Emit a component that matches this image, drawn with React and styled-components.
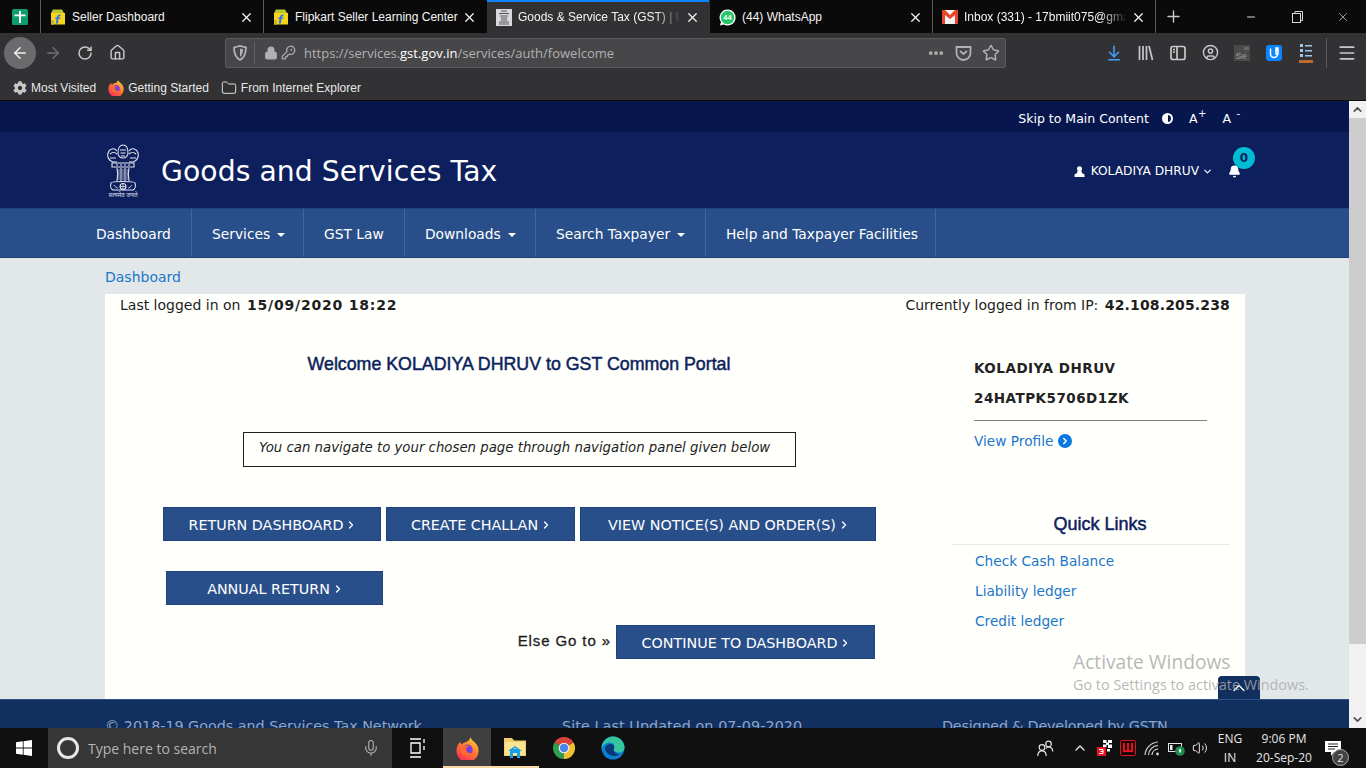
import React from "react";
import styled, { createGlobalStyle } from "styled-components";
import {
  ArrowLeft,
  ArrowRight,
  RotateCw,
  Home,
  Lock,
  KeyRound,
  Ellipsis,
  Star,
  ArrowDownToLine,
  Folder,
  X,
  Plus,
  Minus,
  Mic,
  ChevronUp,
  ChevronDown,
  ChevronRight,
  Volume2,
  Bell,
  Menu,
  CircleUser,
} from "lucide-react";
import { FaCog } from "react-icons/fa";

const GlobalStyle = createGlobalStyle`
  html, body { margin: 0; padding: 0; height: 100%; overflow: hidden; }
  * { box-sizing: border-box; }
  body { font-family: "DejaVu Sans", Verdana, sans-serif; }
`;

const Screen = styled.div`
  position: relative;
  width: 1366px;
  height: 768px;
  display: flex;
  flex-direction: column;
  overflow: hidden;
  background: #e2e8e9;
`;

/* browser chrome */
const TabBar = styled.div`
  height: 33px;
  display: flex;
  background: #0a0a0a;
  color: #f4f4f4;
  font-family: "Liberation Sans", Arial, sans-serif;
  font-size: 12px;
`;

const PinnedTab = styled.div`
  width: 41px;
  display: flex;
  align-items: center;
  padding-left: 12px;
  border-right: 1px solid #5a5a5a;
`;

const Tab = styled.div`
  width: 223px;
  display: flex;
  align-items: center;
  gap: 6px;
  padding: 1px 9px 0;
  border-right: 1px solid ${(p) => (p.$active || p.$beforeActive ? "transparent" : "#5a5a5a")};
  background: ${(p) => (p.$active ? "#323234" : "transparent")};
  box-shadow: ${(p) => (p.$active ? "inset 0 2px 0 #0a84ff" : "none")};
  svg { flex: none; }
`;

const TabTitle = styled.span`
  flex: 1;
  min-width: 0;
  white-space: nowrap;
  ${(p) =>
    p.$fade &&
    `-webkit-mask-image: linear-gradient(to right, #000 85%, transparent 102%);
     mask-image: linear-gradient(to right, #000 85%, transparent 102%);`}
`;

const NewTab = styled.div`
  width: 34px;
  display: flex;
  align-items: center;
  justify-content: center;
  color: #c8c8c8;
`;

const WindowControls = styled.div`
  margin-left: auto;
  display: flex;
  align-items: center;
  color: #d8d8d8;
`;

const WindowButton = styled.div`
  width: 46px;
  display: flex;
  justify-content: center;
`;

const NavToolbar = styled.div`
  height: 39px;
  display: flex;
  align-items: center;
  background: #323234;
  color: #c9c9cb;
`;

const BackCircle = styled.div`
  width: 32px;
  height: 32px;
  margin: 0 1px 0 4px;
  border-radius: 50%;
  background: #6b6b6d;
  color: #eeeeee;
  display: flex;
  align-items: center;
  justify-content: center;
`;

const ToolButton = styled.div`
  width: 32px;
  display: flex;
  justify-content: center;
  color: ${(p) => p.$color || "#c9c9cb"};
`;

const UrlBar = styled.div`
  width: 781px;
  height: 30px;
  margin: 0 92px;
  display: flex;
  align-items: center;
  background: #474749;
  border: 1px solid #5c5c5e;
  border-radius: 2px;
  color: #b1b1b3;
  font-family: "Open Sans", "Liberation Sans", sans-serif;
  font-size: 13px;
`;

const UrlShield = styled.div`
  width: 29px;
  height: 22px;
  display: flex;
  justify-content: center;
  align-items: center;
  border-right: 1px solid #5f6368;
`;

const UrlIcons = styled.div`
  display: flex;
  align-items: center;
  gap: 3px;
  padding: 0 8px 0 9px;
`;

const UrlText = styled.div`
  flex: 1;
  padding-top: 1px;
  white-space: nowrap;
  b { color: #ffffff; font-weight: 400; }
`;

const UrlActions = styled.div`
  display: flex;
  align-items: center;
  gap: 10px;
  padding-right: 5px;
`;

const ToolDivider = styled.div`
  width: 1px;
  height: 30px;
  margin: 0 4px 0 4px;
  background: #5a5a5c;
`;

const BookmarkBar = styled.div`
  height: 29px;
  display: flex;
  align-items: center;
  gap: 12px;
  padding: 3px 0 0 13px;
  background: #323234;
  border-bottom: 1px solid #0c0c0c;
  font-family: "Liberation Sans", Arial, sans-serif;
  font-size: 12px;
`;

const Bookmark = styled.div`
  height: 16px;
  display: flex;
  align-items: center;
  gap: 4px;
  color: #e8e8e8;
`;

const GearIcon = styled(FaCog)`
  width: 14px;
  height: 14px;
  color: #c9c9cb;
`;

/* page */
const Viewport = styled.div`
  flex: 1;
  min-height: 0;
  display: flex;
`;

const Page = styled.div`
  position: relative;
  flex: 1;
  min-width: 0;
  overflow: hidden;
  display: flex;
  flex-direction: column;
`;

const Scrollbar = styled.div`
  width: 17px;
  display: flex;
  flex-direction: column;
  background: #f1f1f1;
  color: #505050;
`;

const ScrollArrow = styled.div`
  height: 17px;
  display: flex;
  align-items: center;
  justify-content: center;
`;

const ScrollThumb = styled.div`
  height: 526px;
  background: #cdcdcd;
`;

const ScrollTrack = styled.div`
  flex: 1;
`;

const TopStrip = styled.div`
  height: 31px;
  flex: none;
  display: flex;
  align-items: center;
  justify-content: flex-end;
  padding: 4px 109px 0 0;
  gap: 13px;
  background: #07174d;
  color: #ffffff;
  font-size: 12.5px;
`;

const ContrastDot = styled.span`
  width: 11px;
  height: 11px;
  border-radius: 50%;
  border: 2px solid #ffffff;
  background: linear-gradient(to right, #ffffff 50%, #07174d 50%);
`;

const FontSizer = styled.span`
  position: relative;
  padding-right: 9px;
  margin-left: 3px;
  sup {
    position: absolute;
    right: 0;
    top: -2px;
    font-size: 10px;
    line-height: 10px;
  }
`;

const SiteHeader = styled.div`
  height: 76px;
  flex: none;
  display: flex;
  align-items: center;
  padding: 2px 108px 0 107px;
  background: #0d1f5c;
  color: #ffffff;
`;

const SiteTitle = styled.div`
  margin-left: 22px;
  font-size: 28.2px;
  letter-spacing: 0.1px;
`;

const UserArea = styled.div`
  position: relative;
  margin-left: auto;
  display: flex;
  align-items: center;
  font-size: 12.2px;
  gap: 6px;
`;

const UserChevron = styled(ChevronDown)`
  margin-left: -3px;
`;

const BellWrap = styled.div`
  position: relative;
  display: flex;
  margin-left: 9px;
`;

const BellBadge = styled.span`
  position: absolute;
  left: 5px;
  top: -18px;
  width: 22px;
  height: 22px;
  border-radius: 50%;
  background: #00bcd4;
  color: #0d1f5c;
  font-size: 12px;
  font-weight: 700;
  display: flex;
  align-items: center;
  justify-content: center;
`;

const MainNav = styled.div`
  height: 50px;
  flex: none;
  display: flex;
  padding-left: 76px;
  background: #294f8a;
  border-top: 1px solid #23457c;
  border-bottom: 1px solid #1d3f73;
`;

const NavItem = styled.div`
  width: ${(p) => p.$w}px;
  display: flex;
  align-items: center;
  gap: 7px;
  padding: 2px 0 0 20px;
  border-right: 1px solid #42659a;
  color: #ffffff;
  font-size: 13.8px;
  white-space: nowrap;
`;

const Caret = styled.span`
  width: 0;
  height: 0;
  border-left: 4px solid transparent;
  border-right: 4px solid transparent;
  border-top: 4px solid #ffffff;
  margin-top: 2px;
`;

const PageBody = styled.div`
  flex: none;
  padding: 0 104px 0 105px;
`;

const Crumb = styled.div`
  height: 36px;
  padding-top: 11px;
  color: #1a77c9;
  font-size: 14px;
`;

const Card = styled.div`
  height: 405px;
  background: #fffffc;
  color: #1e1e1e;
  font-size: 14px;
`;

const LoginRow = styled.div`
  display: flex;
  justify-content: space-between;
  padding: 3px 15px 0;
  height: 22px;
`;

const Stamp = styled.b`
  font-weight: 700;
  margin-left: 2px;
  letter-spacing: ${(p) => p.$spacing}px;
`;

const CardColumns = styled.div`
  display: flex;
`;

const LeftColumn = styled.div`
  width: 828px;
`;

const Welcome = styled.h1`
  margin: 38px 0 0;
  text-align: center;
  font-family: "Liberation Sans", Arial, sans-serif;
  font-size: 17.8px;
  line-height: 20px;
  font-weight: 400;
  -webkit-text-stroke: 0.5px #0d1f5c;
  color: #0d1f5c;
`;

const NoteBox = styled.div`
  width: 553px;
  height: 35px;
  margin: 58px 0 0 138px;
  padding: 0 0 4px 15px;
  display: flex;
  align-items: center;
  border: 1px solid #1e1e1e;
  font-size: 13.3px;
  font-style: italic;
`;

const ButtonRow = styled.div`
  display: flex;
  gap: 5px;
  margin: ${(p) => p.$top}px 0 0 ${(p) => p.$left}px;
`;

const BlueButton = styled.div`
  height: 34px;
  width: ${(p) => p.$w}px;
  padding: 2px 0 0 2px;
  display: flex;
  align-items: center;
  justify-content: center;
  gap: 2px;
  background: #294f8a;
  border: 1px solid #1f437c;
  color: #ffffff;
  font-size: 14.3px;
  white-space: nowrap;
`;

const ElseRow = styled.div`
  display: flex;
  align-items: center;
  justify-content: flex-end;
  gap: 5px;
  margin-top: 20px;
  padding-right: 58px;
`;

const ElseLabel = styled.span`
  margin-bottom: 3px;
  font-family: "Liberation Sans", Arial, sans-serif;
  font-size: 15px;
  font-weight: 400;
  letter-spacing: 0.9px;
  -webkit-text-stroke: 0.3px #1e1e1e;
`;

const RightColumn = styled.div`
  width: 278px;
  margin-left: 19px;
`;

const Profile = styled.div`
  padding: 37px 23px 0 22px;
`;

const ProfileLine = styled.div`
  height: 30px;
  font-size: 13.5px;
  line-height: 30px;
  font-weight: 700;
  letter-spacing: 0.5px;
  color: #222;
`;

const ProfileRule = styled.div`
  height: 1px;
  margin-top: 7px;
  background: #808080;
`;

const LinkText = styled.div`
  display: flex;
  align-items: center;
  gap: 5px;
  height: 30px;
  color: #1a77c9;
  font-size: 13.7px;
`;

const ProfileLink = styled(LinkText)`
  margin-top: 5px;
`;

const ArrowDot = styled.span`
  width: 14px;
  height: 14px;
  border-radius: 50%;
  background: #0a78e0;
  color: #ffffff;
  display: flex;
  align-items: center;
  justify-content: center;
`;

const QuickTitle = styled.h2`
  margin: 58px 0 0;
  padding: 0 0 10px 18px;
  text-align: center;
  border-bottom: 1px solid #e9ebe9;
  font-family: "Liberation Sans", Arial, sans-serif;
  font-size: 18px;
  line-height: 20px;
  font-weight: 400;
  -webkit-text-stroke: 0.5px #0d1f5c;
  color: #0d1f5c;
`;

const QuickLinks = styled.div`
  padding: 1px 0 0 23px;
`;

const Footer = styled.div`
  height: 60px;
  flex: none;
  display: flex;
  padding: 18px 0 0 105px;
  background: #12305f;
  border-top: 1px solid #2d5288;
  color: #8ea6c6;
  font-size: 14.3px;
`;

const FooterCell = styled.span`
  width: ${(p) => p.$w}px;
  white-space: nowrap;
  letter-spacing: ${(p) => p.$spacing || 0}px;
`;

const BackToTop = styled.div`
  position: absolute;
  left: 1218px;
  top: 575px;
  width: 42px;
  height: 23px;
  padding-top: 2px;
  display: flex;
  justify-content: center;
  color: #ffffff;
  background: #12305f;
  border-radius: 4px 4px 0 0;
`;

const ActivateNote = styled.div`
  position: absolute;
  left: 1073px;
  top: 650px;
  font-family: "Open Sans", "Liberation Sans", sans-serif;
  font-size: 14.4px;
  color: rgba(170, 170, 170, 0.85);
  div:first-child { font-size: 19.2px; line-height: 24px; }
  div:last-child { line-height: 22px; }
`;

/* windows taskbar */
const Taskbar = styled.div`
  height: 40px;
  flex: none;
  display: flex;
  align-items: center;
  background: #101010;
  color: #ffffff;
  font-family: "Open Sans", "Liberation Sans", sans-serif;
`;

const StartButton = styled.div`
  width: 48px;
  display: flex;
  justify-content: center;
`;

const SearchBox = styled.div`
  width: 344px;
  height: 40px;
  display: flex;
  align-items: center;
  gap: 9px;
  padding: 0 12px 0 9px;
  background: #363636;
  color: #b4b4b4;
  font-size: 14px;
`;

const Cortana = styled.span`
  width: 22px;
  height: 22px;
  border-radius: 50%;
  border: 3px solid #e8e8e8;
`;

const SearchHint = styled.span`
  flex: 1;
`;

const TaskApp = styled.div`
  width: ${(p) => p.$w || 48}px;
  height: 40px;
  display: flex;
  align-items: center;
  justify-content: center;
  background: ${(p) => (p.$active ? "#3f3f3f" : "transparent")};
  box-shadow: ${(p) => (p.$open ? "inset 0 -2px 0 #f8d9a8" : "none")};
`;

const Tray = styled.div`
  margin-left: auto;
  display: flex;
  align-items: center;
  color: #e6e6e6;
`;

const TrayIcon = styled.div`
  width: ${(p) => p.$w || 24}px;
  display: flex;
  justify-content: center;
`;

const TrayStack = styled.div`
  text-align: center;
  font-size: 12px;
  line-height: 19px;
  width: ${(p) => p.$w}px;
`;

const NoticeIcon = styled.div`
  position: relative;
  width: 46px;
  padding-left: 5px;
  display: flex;
`;

const NoticeBadge = styled.span`
  position: absolute;
  left: 12px;
  top: 8px;
  width: 17px;
  height: 17px;
  border-radius: 50%;
  background: #444;
  border: 1px solid #aaa;
  font-size: 11px;
  display: flex;
  align-items: center;
  justify-content: center;
`;

function FlipkartIcon() {
  return (
    <svg width="16" height="16" viewBox="0 0 16 16">
      <path d="M1 4h14v11.500H1z" fill="#f7d51d" />
      <path d="M3 .5h9l2 3.500H1z" fill="#b5c832" />
      <path d="M1 11h3v4.500H1z" fill="#c9b92a" />
      <path d="M10.500 5.500c-2.500 0-3.500 1-3.800 3H5.300l-.2 1.300h1.400L5.800 14.500h2l.7-4.700h2l.2-1.300h-2c.1-1 .6-1.400 1.800-1.400z" fill="#2874f0" />
    </svg>
  );
}

function PinnedIcon() {
  return (
    <svg width="16" height="16" viewBox="0 0 16 16">
      <rect width="16" height="16" rx="1.500" fill="#0f9d6b" />
      <path d="M7 2h2v3.500h4.500v1.800H9V14H7V7.300H2.500V5.500H7z" fill="#fff" />
    </svg>
  );
}

function EmblemIcon() {
  return (
    <svg width="32" height="54" viewBox="0 0 32 54">
      <g fill="none" stroke="#e6e6f0" strokeWidth="1.100">
        <path d="M11 9c0-5 2-8 5-8s5 3 5 8c0 3-2 5-5 5s-5-2-5-5z" />
        <path d="M10 7C7 3 2 5 1 9c-1 4 1 8 5 9h4M22 7c3-4 8-2 9 2 1 4-1 8-5 9h-4" />
        <path d="M13 6h6M13.500 9h5M14 12h4M3 10c2-2 5-2 7 0M29 10c-2-2-5-2-7 0M3 14h6M23 14h6" />
        <path d="M5 19h22v4H5z" />
        <path d="M9 21h2M13 21h2M17 21h2M21 21h2" />
        <path d="M10 24c1 4 1 8 0 13M14 24v13M18 24v13M22 24c-1 4-1 8 0 13" />
        <path d="M12 25v11M20 25v11M16 25v11" strokeWidth="0.600" />
        <path d="M4 39c0-2 24-2 24 0 1 3 0 6-2 7H6c-2-1-3-4-2-7z" />
        <circle cx="16" cy="42.500" r="3" />
        <path d="M16 39.500v6M13 42.500h6M7 41c1 2 3 3 4 3M25 41c-1 2-3 3-4 3" strokeWidth="0.800" />
      </g>
      <text x="16" y="53" textAnchor="middle" fontSize="6" fill="#dcdce8" fontFamily="Noto Sans, DejaVu Sans, sans-serif">सत्यमेव जयते</text>
    </svg>
  );
}

function GstFavicon() {
  return (
    <svg width="16" height="17" viewBox="0 0 16 17">
      <rect width="16" height="17" fill="#d9d9dc" />
      <g fill="none" stroke="#55555c" strokeWidth="1">
        <path d="M5 2h6M3 4.500h10M4 7h8M6 8v4M10 8v4M8 8v4M3 13h10M3 15h10" />
      </g>
    </svg>
  );
}

function GmailIcon() {
  return (
    <svg width="16" height="14" viewBox="0 0 16 14">
      <rect width="16" height="14" fill="#f2f2f2" />
      <path d="M0 0h3l5 5 5-5h3v14h-3V5L8 9 3 5v9H0z" fill="#e8452c" />
    </svg>
  );
}

function WhatsAppIcon() {
  return (
    <svg width="17" height="17" viewBox="0 0 17 17">
      <path d="M8.500.5a8 8 0 1 1-3.800 15L1 16.500l1-3.500A8 8 0 0 1 8.500.5z" fill="#ffffff" />
      <circle cx="8.500" cy="8.500" r="6.800" fill="#25c76a" />
      <text x="8.500" y="11" fontSize="7.500" fontWeight="700" textAnchor="middle" fill="#fff" fontFamily="Liberation Sans">44</text>
    </svg>
  );
}

function FirefoxIcon({ id, size = 16 }) {
  return (
    <svg width={size} height={size * 1.08} viewBox="0 0 24 26">
      <defs>
        <linearGradient id={id} x1="0.8" y1="0" x2="0.2" y2="1">
          <stop offset="0" stopColor="#ffd33d" />
          <stop offset="0.45" stopColor="#ff7b2e" />
          <stop offset="1" stopColor="#f8275f" />
        </linearGradient>
      </defs>
      <path d="M15 1c1 3 3 4 5 6 3 3 4 6 3.500 9.500A11.500 11.500 0 0 1 .5 15C.5 11 3 7 5 6c0 1 0 2 1 3 1-2 3-2.500 5-3 2-1 4-2.500 4-5z" fill={`url(#${id})`} />
      <circle cx="12" cy="14.500" r="5.500" fill="#7a3de0" />
      <path d="M6.500 11c3-1.500 6-1 7 0-2 .5-3 1.500-3 3 0 3 3 5 7 3.500-2 3.500-8 4.500-11 1-2-2-2.500-5-0-7.500z" fill="#ff6a2e" />
    </svg>
  );
}

function ChromeIcon() {
  return (
    <svg width="24" height="24" viewBox="0 0 24 24">
      <path d="M12 12L2.470 6.500A11 11 0 0 1 21.530 6.500z" fill="#d8443a" />
      <path d="M12 12l9.530-5.500A11 11 0 0 1 12 23z" fill="#f3c02e" />
      <path d="M12 12v11A11 11 0 0 1 2.470 6.500z" fill="#2f9e4f" />
      <circle cx="12" cy="12" r="5.300" fill="#f2f2f2" />
      <circle cx="12" cy="12" r="4.200" fill="#4a84ea" />
    </svg>
  );
}

function EdgeIcon() {
  return (
    <svg width="24" height="24" viewBox="0 0 24 24">
      <circle cx="12" cy="12" r="11.500" fill="#0c7fd3" />
      <path d="M12 .5C18.500.5 23.500 5.500 23.500 11.500c0 3-2.500 5-5.500 5-3 0-5.500-1.500-5.500-3 0-1 1-1.300 1-3C13.500 7.500 10.500 6 8 6.500 4 7 1.500 9.500.7 13 .5 6 5.500.5 12 .5z" fill="#35c6a0" />
      <path d="M4 12c1-3 4-4.500 6.500-4 2.500.5 3 3 2.500 4.500-1 3 2 6 6 5.500-2 1.500-4 2-6 2-5 0-9-4-9-8z" fill="#063a78" />
    </svg>
  );
}

function ExplorerIcon() {
  return (
    <svg width="22" height="22" viewBox="0 0 22 22">
      <path d="M0 1h8l2 2.500h12V19H0z" fill="#f0cf6a" />
      <path d="M1 5h20v13H1z" fill="#fae596" />
      <path d="M6 12h10v9h-3v-5H9v5H6z" fill="#1aa0e6" />
      <path d="M4 14l7-5 7 5h-2l-5-3-5 3z" fill="#1aa0e6" />
    </svg>
  );
}

function WindowsLogo() {
  return (
    <svg width="16" height="16" viewBox="0 0 16 16" fill="#fff">
      <path d="M0 2.300l6.800-1v6.300H0zM7.600 1.200L16 0v7.600H7.600zM0 8.400h6.800v6.300l-6.800-1zM7.600 8.400H16V16l-8.400-1.200z" />
    </svg>
  );
}

function PocketIcon() {
  return (
    <svg width="17" height="16" viewBox="0 0 17 16" fill="none" stroke="currentColor" strokeWidth="1.800">
      <path d="M1.500 2h14v6a7 7 0 0 1-14 0z" />
      <path d="M5 6l3.500 3L12 6" />
    </svg>
  );
}

function ShieldIcon() {
  return (
    <svg width="14" height="16" viewBox="0 0 14 16" fill="none" stroke="currentColor" strokeWidth="1.800">
      <path d="M1 2.500C3 2 5 1.500 7 1c2 .5 4 1 6 1.500 0 6-1.500 10-6 12.500C2.500 12.500 1 8.500 1 2.500z" />
      <path d="M7 3.500c1 .3 2 .5 3.200.8C10 8 9 10.500 7 12z" fill="currentColor" stroke="none" />
    </svg>
  );
}

function LibraryIcon() {
  return (
    <svg width="16" height="16" viewBox="0 0 16 16" fill="none" stroke="currentColor" strokeWidth="1.700">
      <path d="M1.500 1v14M5 1v14M8.500 1v14M11 1l3.500 14" />
    </svg>
  );
}

function SidebarIcon() {
  return (
    <svg width="16" height="16" viewBox="0 0 16 16" fill="none" stroke="currentColor" strokeWidth="1.700">
      <rect x="1" y="1.500" width="14" height="13" rx="2" />
      <path d="M7 1.500v13" />
      <path d="M3 4.500h2M3 7h2" />
    </svg>
  );
}

function SeleniumIcon() {
  return (
    <svg width="16" height="16" viewBox="0 0 16 16">
      <rect width="16" height="16" fill="#4a4a4a" />
      <text x="1.500" y="14" fontSize="9" fontWeight="700" fill="#8a8a8a" fontFamily="Liberation Sans">Se</text>
      <rect x="10" y="2" width="5" height="3" fill="#6a6a6a" />
    </svg>
  );
}

function UBlockIcon() {
  return (
    <svg width="16" height="16" viewBox="0 0 16 16">
      <rect width="16" height="16" rx="3" fill="#0a84ff" />
      <path d="M4.500 3.500v5.500a3.500 3.500 0 0 0 7 0M10 3h2v2h-2zM10 6h2v3h-2z" fill="none" stroke="#fff" strokeWidth="1.500" />
    </svg>
  );
}

function ListExtensionIcon() {
  return (
    <svg width="14" height="20" viewBox="0 0 14 20">
      <path d="M1 1h3v3H1zM1 6h3v3H1zM1 11h3v3H1z" fill="#9fc7ea" />
      <path d="M6 2h7v1.500H6zM6 7h7v1.500H6zM6 12h7v1.500H6z" fill="#9fc7ea" />
      <rect y="17" width="14" height="3" fill="#c0692a" />
    </svg>
  );
}

function RestoreIcon() {
  return (
    <svg width="11" height="12" viewBox="0 0 11 12" fill="none" stroke="currentColor">
      <rect x="0.500" y="2.500" width="8" height="9" />
      <path d="M3 2.500V.5h7.500v9H8.500" />
    </svg>
  );
}

function PeopleIcon() {
  return (
    <svg width="17" height="17" viewBox="0 0 17 17" fill="none" stroke="#e6e6e6" strokeWidth="1.200">
      <circle cx="11.500" cy="4" r="2.800" />
      <circle cx="5" cy="7.500" r="2.800" />
      <path d="M.8 16c0-3.500 1.800-5.200 4.200-5.200S9.200 12.500 9.200 16M9 8.500c.8-1 1.500-1.500 2.500-1.500 2.400 0 4.200 1.500 4.200 4.500" />
    </svg>
  );
}

function DropboxTrayIcon() {
  return (
    <svg width="17" height="16" viewBox="0 0 17 16">
      <path d="M1 7h9v9H1z" fill="#e81123" />
      <path d="M7 0h3.500v3H7zM12 0h4v3h-4zM7 4.500h3.500v2.500H7zM12 4.500h4V8h-4zM10 2.500h3v2.500h-3zM11 9h3v2.500h-3z" fill="#fff" />
      <path d="M3 9.500h4v4H3M4.500 11.500H7" fill="none" stroke="#fff" />
    </svg>
  );
}

function WpsIcon() {
  return (
    <svg width="16" height="16" viewBox="0 0 16 16">
      <rect x="0.500" y="0.500" width="15" height="15" rx="1" fill="#1a0505" stroke="#e81123" />
      <path d="M4 3v8h8V3M8 3v8" fill="none" stroke="#e81123" strokeWidth="2" />
    </svg>
  );
}

function SignalIcon() {
  return (
    <svg width="16" height="16" viewBox="0 0 16 16" fill="none" stroke="#d8d8d8" strokeWidth="1.200">
      <path d="M1 15A14 14 0 0 1 14 2M4.500 15A10 10 0 0 1 14 5.500M8 15A6.500 6.500 0 0 1 14 9" />
      <circle cx="13.500" cy="14" r="1.400" fill="#d8d8d8" stroke="none" />
    </svg>
  );
}

function BatteryIcon() {
  return (
    <svg width="17" height="16" viewBox="0 0 17 16">
      <rect x="0.500" y="3.500" width="13" height="8" fill="none" stroke="#e6e6e6" />
      <rect x="2" y="5" width="2.500" height="5" fill="#e6e6e6" />
      <circle cx="12" cy="11" r="4.800" fill="#1e8f4e" />
      <path d="M12 8.500c1.500 1 1.500 3 0 4.500-1.500-1.500-1.500-3.500 0-4.500z" fill="#fff" />
    </svg>
  );
}

const browserTabs = [
  { title: "Seller Dashboard", icon: <FlipkartIcon /> },
  { title: "Flipkart Seller Learning Center", icon: <FlipkartIcon />, beforeActive: true },
  { title: "Goods & Service Tax (GST) | Us", icon: <GstFavicon />, active: true, fade: true },
  { title: "(44) WhatsApp", icon: <WhatsAppIcon /> },
  { title: "Inbox (331) - 17bmiit075@gma", icon: <GmailIcon />, fade: true },
];

const navItems = [
  { label: "Dashboard", width: 116 },
  { label: "Services", width: 112, caret: true },
  { label: "GST Law", width: 101 },
  { label: "Downloads", width: 131, caret: true },
  { label: "Search Taxpayer", width: 170, caret: true },
  { label: "Help and Taxpayer Facilities", width: 230 },
];

const quickLinks = ["Check Cash Balance", "Liability ledger", "Credit ledger"];

function PortalButton({ width, children }) {
  return (
    <BlueButton $w={width}>
      {children}
      <ChevronRight size={12} strokeWidth={2.5} />
    </BlueButton>
  );
}

export default function App() {
  return (
    <Screen>
      <GlobalStyle />
      <TabBar>
        <PinnedTab>
          <PinnedIcon />
        </PinnedTab>
        {browserTabs.map((tab) => (
          <Tab key={tab.title} $active={tab.active} $beforeActive={tab.beforeActive}>
            {tab.icon}
            <TabTitle $fade={tab.fade}>{tab.title}</TabTitle>
            <X size={15} strokeWidth={2} />
          </Tab>
        ))}
        <NewTab>
          <Plus size={19} strokeWidth={1.8} />
        </NewTab>
        <WindowControls>
          <WindowButton>
            <Minus size={12} />
          </WindowButton>
          <WindowButton>
            <RestoreIcon />
          </WindowButton>
          <WindowButton>
            <X size={14} strokeWidth={1.2} />
          </WindowButton>
        </WindowControls>
      </TabBar>

      <NavToolbar>
        <BackCircle>
          <ArrowLeft size={18} />
        </BackCircle>
        <ToolButton $color="#707072">
          <ArrowRight size={18} />
        </ToolButton>
        <ToolButton>
          <RotateCw size={16} strokeWidth={2.2} />
        </ToolButton>
        <ToolButton>
          <Home size={17} strokeWidth={2} />
        </ToolButton>
        <UrlBar>
          <UrlShield>
            <ShieldIcon />
          </UrlShield>
          <UrlIcons>
            <Lock size={14} fill="currentColor" />
            <KeyRound size={15} />
          </UrlIcons>
          <UrlText>
            https://services.<b>gst.gov.in</b>/services/auth/fowelcome
          </UrlText>
          <UrlActions>
            <Ellipsis size={18} strokeWidth={3} />
            <PocketIcon />
            <Star size={18} strokeWidth={2} />
          </UrlActions>
        </UrlBar>
        <ToolButton $color="#45a1ff">
          <ArrowDownToLine size={18} strokeWidth={2} />
        </ToolButton>
        <ToolButton>
          <LibraryIcon />
        </ToolButton>
        <ToolButton>
          <SidebarIcon />
        </ToolButton>
        <ToolButton>
          <CircleUser size={17} />
        </ToolButton>
        <ToolButton>
          <SeleniumIcon />
        </ToolButton>
        <ToolButton>
          <UBlockIcon />
        </ToolButton>
        <ToolButton>
          <ListExtensionIcon />
        </ToolButton>
        <ToolDivider />
        <ToolButton>
          <Menu size={20} strokeWidth={2} />
        </ToolButton>
      </NavToolbar>

      <BookmarkBar>
        <Bookmark>
          <GearIcon />
          Most Visited
        </Bookmark>
        <Bookmark>
          <FirefoxIcon id="ff-bookmark" />
          Getting Started
        </Bookmark>
        <Bookmark>
          <Folder size={16} strokeWidth={1.4} />
          From Internet Explorer
        </Bookmark>
      </BookmarkBar>

      <Viewport>
        <Page>
          <TopStrip>
            <span>Skip to Main Content</span>
            <ContrastDot />
            <FontSizer>
              A<sup>+</sup>
            </FontSizer>
            <FontSizer>
              A<sup>-</sup>
            </FontSizer>
          </TopStrip>
          <SiteHeader>
            <EmblemIcon />
            <SiteTitle>Goods and Services Tax</SiteTitle>
            <UserArea>
              <svg width="11" height="11" viewBox="0 0 11 11" fill="#fff">
                <circle cx="5.500" cy="2.800" r="2.500" />
                <path d="M3.500 5h4l.5 2 2.500 1.500V11H.5V8.500L3 7z" />
              </svg>
              <span>KOLADIYA DHRUV</span>
              <UserChevron size={11} strokeWidth={2.5} />
              <BellWrap>
                <Bell size={13} fill="#fff" />
                <BellBadge>0</BellBadge>
              </BellWrap>
            </UserArea>
          </SiteHeader>
          <MainNav>
            {navItems.map((item) => (
              <NavItem key={item.label} $w={item.width}>
                {item.label}
                {item.caret && <Caret />}
              </NavItem>
            ))}
          </MainNav>
          <PageBody>
            <Crumb>Dashboard</Crumb>
            <Card>
              <LoginRow>
                <span>
                  Last logged in on <Stamp $spacing={0.8}>15/09/2020 18:22</Stamp>
                </span>
                <span>
                  Currently logged in from IP: <Stamp $spacing={0.15}>42.108.205.238</Stamp>
                </span>
              </LoginRow>
              <CardColumns>
                <LeftColumn>
                  <Welcome>Welcome KOLADIYA DHRUV to GST Common Portal</Welcome>
                  <NoteBox>You can navigate to your chosen page through navigation panel given below</NoteBox>
                  <ButtonRow $top={40} $left={58}>
                    <PortalButton width={218}>RETURN DASHBOARD</PortalButton>
                    <PortalButton width={189}>CREATE CHALLAN</PortalButton>
                    <PortalButton width={296}>VIEW NOTICE(S) AND ORDER(S)</PortalButton>
                  </ButtonRow>
                  <ButtonRow $top={30} $left={61}>
                    <PortalButton width={217}>ANNUAL RETURN</PortalButton>
                  </ButtonRow>
                  <ElseRow>
                    <ElseLabel>Else Go to »</ElseLabel>
                    <PortalButton width={259}>CONTINUE TO DASHBOARD</PortalButton>
                  </ElseRow>
                </LeftColumn>
                <RightColumn>
                  <Profile>
                    <ProfileLine>KOLADIYA DHRUV</ProfileLine>
                    <ProfileLine>24HATPK5706D1ZK</ProfileLine>
                    <ProfileRule />
                    <ProfileLink>
                      View Profile
                      <ArrowDot>
                        <ChevronRight size={10} strokeWidth={3.5} />
                      </ArrowDot>
                    </ProfileLink>
                  </Profile>
                  <QuickTitle>Quick Links</QuickTitle>
                  <QuickLinks>
                    {quickLinks.map((link) => (
                      <LinkText key={link}>{link}</LinkText>
                    ))}
                  </QuickLinks>
                </RightColumn>
              </CardColumns>
            </Card>
          </PageBody>
          <Footer>
            <FooterCell $w={457}>© 2018-19 Goods and Services Tax Network</FooterCell>
            <FooterCell $w={380} $spacing={0.1}>Site Last Updated on 07-09-2020</FooterCell>
            <FooterCell $w={300} $spacing={-0.17}>Designed &amp; Developed by GSTN</FooterCell>
          </Footer>
          <BackToTop>
            <ChevronUp size={20} strokeWidth={1.6} />
          </BackToTop>
        </Page>
        <Scrollbar>
          <ScrollArrow>
            <ChevronUp size={13} strokeWidth={3} />
          </ScrollArrow>
          <ScrollThumb />
          <ScrollTrack />
          <ScrollArrow>
            <ChevronDown size={13} strokeWidth={3} />
          </ScrollArrow>
        </Scrollbar>
      </Viewport>

      <Taskbar>
        <StartButton>
          <WindowsLogo />
        </StartButton>
        <SearchBox>
          <Cortana />
          <SearchHint>Type here to search</SearchHint>
          <Mic size={18} strokeWidth={1.4} />
        </SearchBox>
        <TaskApp $w={51}>
          <svg width="18" height="20" viewBox="0 0 18 20" fill="none" stroke="#fff" strokeWidth="1.300">
            <path d="M1 1h11M1 19h11M2 5h9v10H2zM15 1v4M15 8v4" />
          </svg>
        </TaskApp>
        <TaskApp $active $open>
          <FirefoxIcon id="ff-task" size={23} />
        </TaskApp>
        <TaskApp $open>
          <ExplorerIcon />
        </TaskApp>
        <TaskApp $w={50}>
          <ChromeIcon />
        </TaskApp>
        <TaskApp>
          <EdgeIcon />
        </TaskApp>
        <Tray>
          <TrayIcon $w={30}>
            <PeopleIcon />
          </TrayIcon>
          <TrayIcon $w={8} />
          <TrayIcon $w={24}>
            <ChevronUp size={16} />
          </TrayIcon>
          <TrayIcon>
            <DropboxTrayIcon />
          </TrayIcon>
          <TrayIcon>
            <WpsIcon />
          </TrayIcon>
          <TrayIcon>
            <SignalIcon />
          </TrayIcon>
          <TrayIcon>
            <BatteryIcon />
          </TrayIcon>
          <TrayIcon>
            <Volume2 size={16} strokeWidth={1.5} />
          </TrayIcon>
          <TrayStack $w={36}>
            ENG
            <br />
            IN
          </TrayStack>
          <TrayStack $w={72}>
            9:06 PM
            <br />
            20-Sep-20
          </TrayStack>
          <NoticeIcon>
            <svg width="16" height="15" viewBox="0 0 16 15" fill="#fff">
              <path d="M0 0h16v11H9l-3 4v-4H0z" />
              <path d="M3 3h10M3 5.500h10M3 8h7" stroke="#222" />
            </svg>
            <NoticeBadge>2</NoticeBadge>
          </NoticeIcon>
        </Tray>
      </Taskbar>

      <ActivateNote>
        <div>Activate Windows</div>
        <div>Go to Settings to activate Windows.</div>
      </ActivateNote>
    </Screen>
  );
}
